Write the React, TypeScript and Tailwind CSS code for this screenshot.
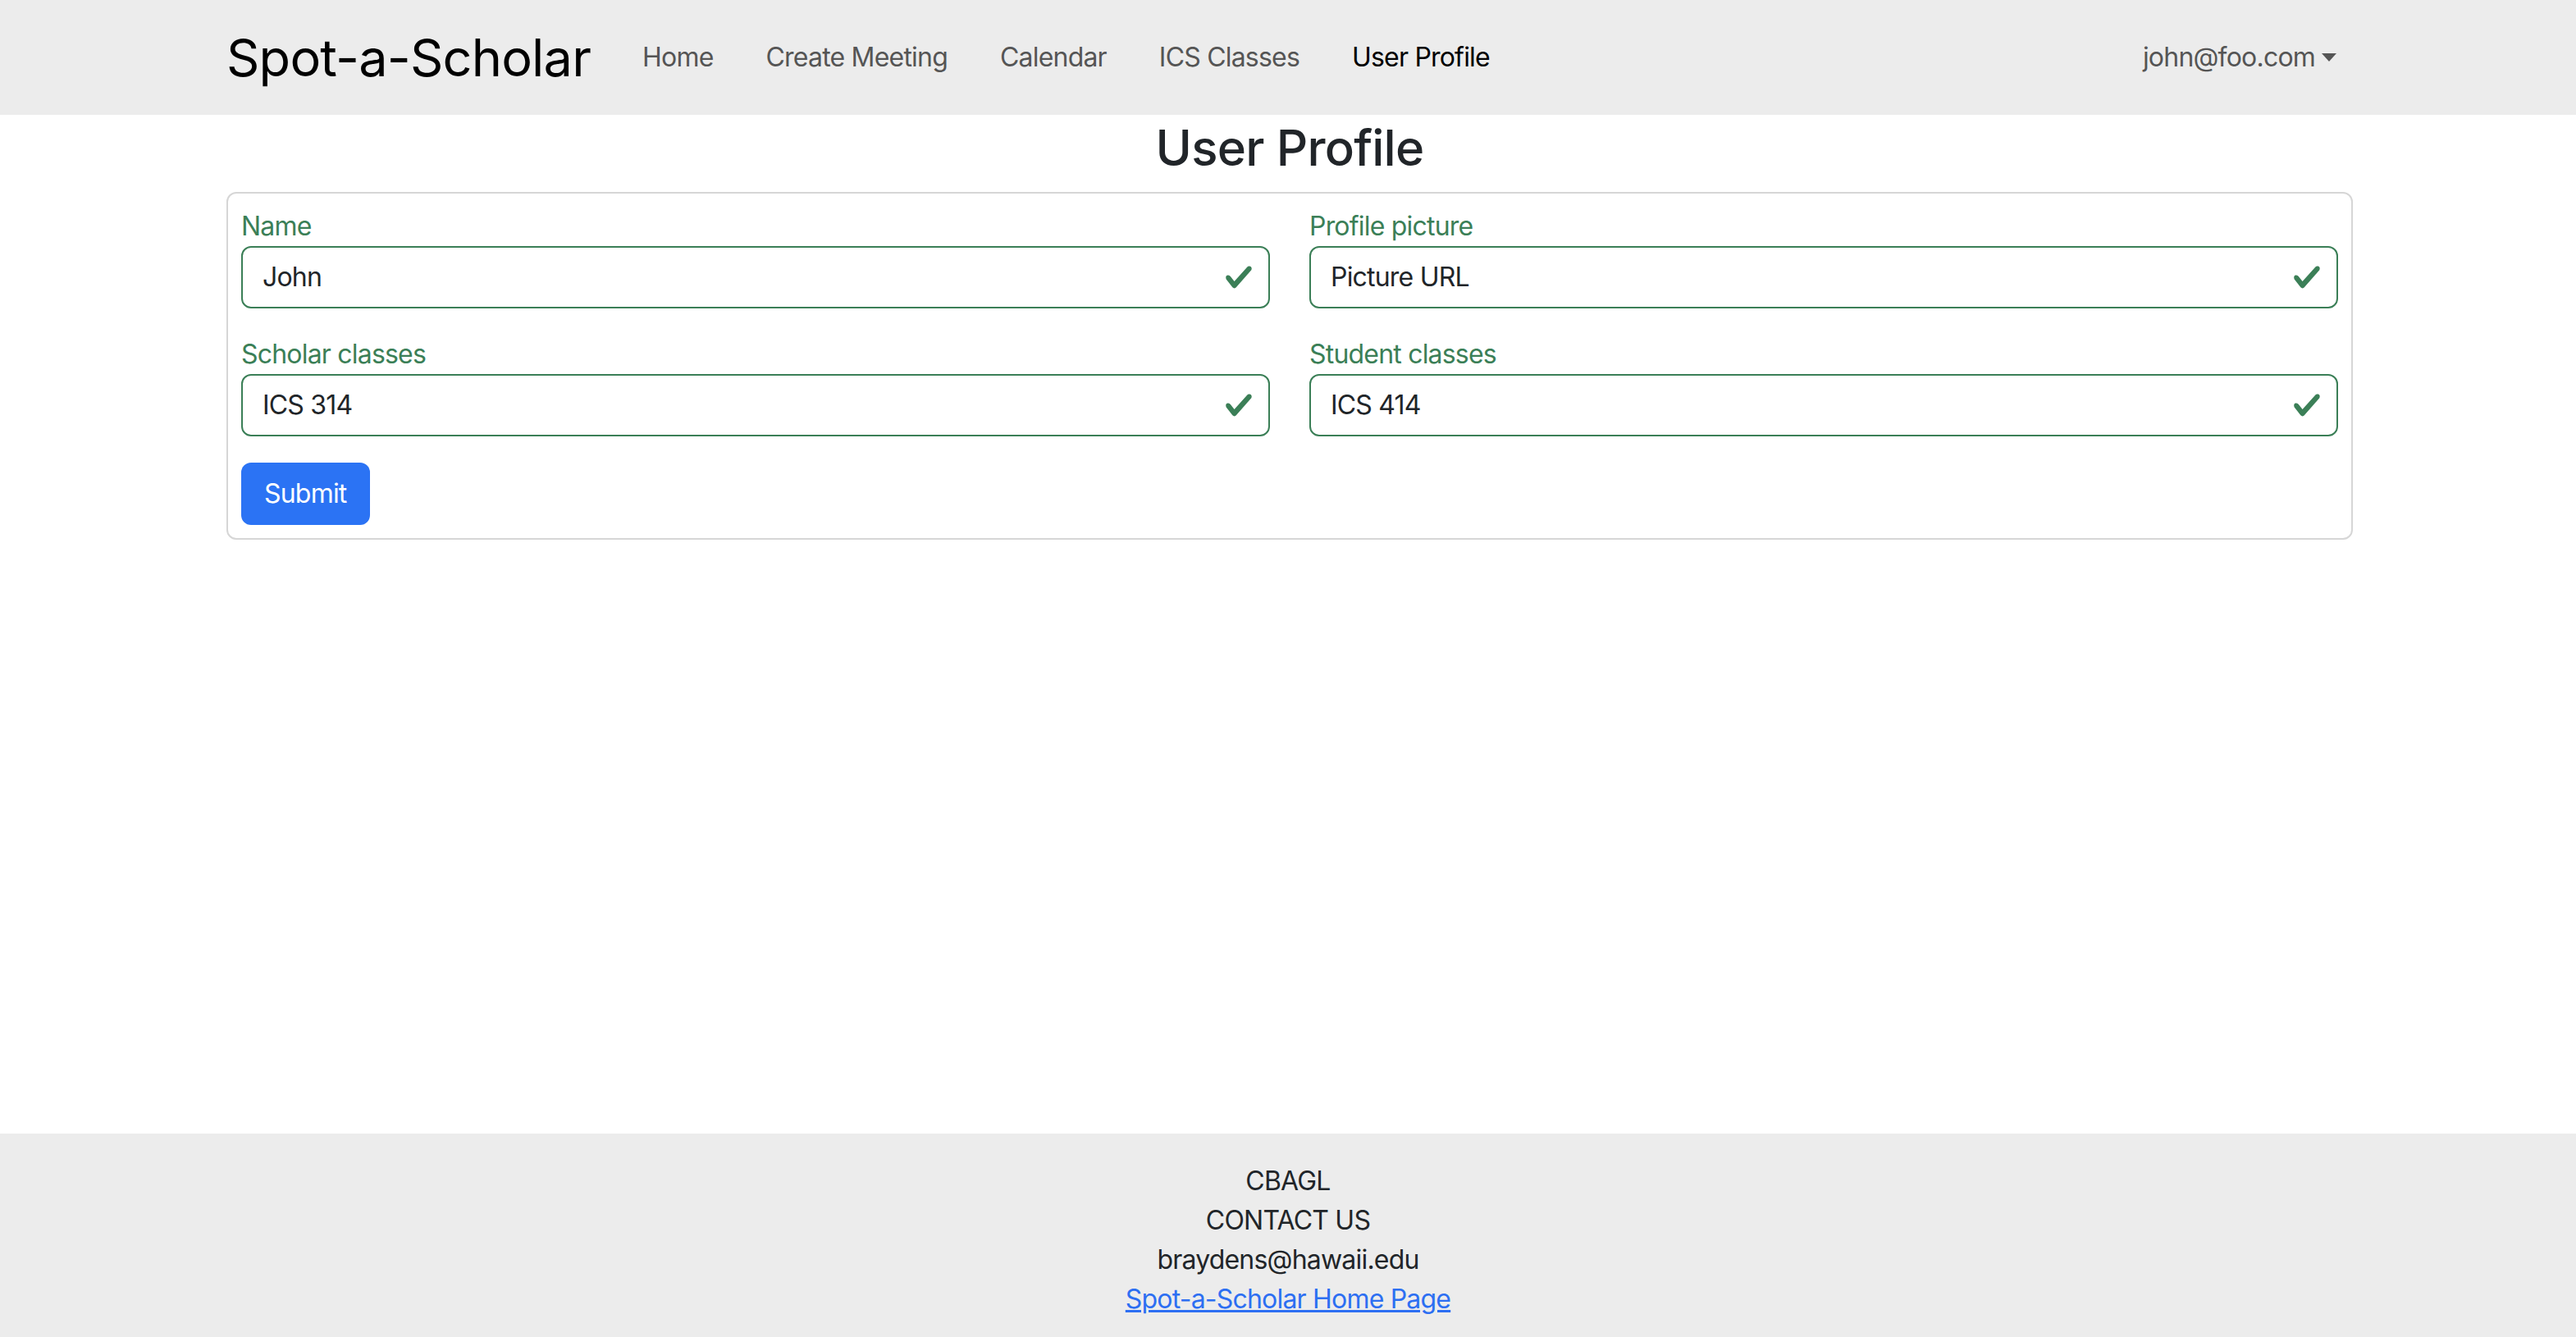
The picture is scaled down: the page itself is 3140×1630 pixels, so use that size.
import React from "react";

type Field = { label: string; value: string };

const rows: Field[][] = [
  [
    { label: "Name", value: "John" },
    { label: "Profile picture", value: "Picture URL" },
  ],
  [
    { label: "Scholar classes", value: "ICS 314" },
    { label: "Student classes", value: "ICS 414" },
  ],
];

const navLinks = ["Home", "Create Meeting", "Calendar", "ICS Classes", "User Profile"];

function CheckIcon() {
  return (
    <svg viewBox="0 0 8 8" className="h-[36px] w-[36px] shrink-0">
      <path
        fill="#3b7f57"
        d="M2.3 6.73.6 4.53c-.4-1.04.46-1.4 1.1-.8l1.1 1.4 3.4-3.8c.6-.63 1.6-.27 1.2.7l-4 4.6c-.43.5-.8.4-1.1.1z"
      />
    </svg>
  );
}

function ValidInput({ label, value }: Field) {
  return (
    <div className="flex flex-1 flex-col">
      <label className="text-[32px] leading-[48px] text-[#3b7f57]">{label}</label>
      <div className="flex h-[76px] items-center justify-between rounded-[12px] border-2 border-[#3b7f57] bg-white pl-[24px] pr-[18px]">
        <span className="text-[32px] text-[#212529]">{value}</span>
        <CheckIcon />
      </div>
    </div>
  );
}

export default function App() {
  return (
    <div
      className="flex min-h-screen flex-col bg-white tracking-[-0.8px] text-[#212529]"
      style={{ fontFamily: "Inter, 'Noto Sans', sans-serif" }}
    >
      <header className="h-[140px] bg-[#ececec]">
        <div className="mx-auto flex h-full w-[2640px] items-center px-[26px]">
          <a href="#" className="mr-[63px] text-[63px] leading-none tracking-[-0.8px] text-black">
            Spot-a-Scholar
          </a>
          <nav className="flex items-center gap-[64px]">
            {navLinks.map((l) => (
              <a
                key={l}
                href="#"
                className={`text-[32px] ${l === "User Profile" ? "text-black" : "text-[#555555]"}`}
              >
                {l}
              </a>
            ))}
          </nav>
          <div className="ml-auto mr-[16px] flex items-center gap-[8px] text-[32px] text-[#555555]">
            <span>john@foo.com</span>
            <span className="h-0 w-0 border-x-[9px] border-t-[10px] border-x-transparent border-t-[#555555]" />
          </div>
        </div>
      </header>

      <main className="ml-[276px] w-[2592px]">
        <h2 className="pt-[4px] pb-[18px] text-center text-[60px] font-medium leading-[72px] tracking-[-0.8px]">
          User Profile
        </h2>
        <div className="flex flex-col gap-[32px] rounded-[12px] border-2 border-[#d6d6d6] p-[16px]">
          {rows.map((row, i) => (
            <div key={i} className="flex gap-[48px]">
              {row.map((f) => (
                <ValidInput key={f.label} {...f} />
              ))}
            </div>
          ))}
          <div>
            <button className="h-[76px] rounded-[12px] bg-[#2b73f4] px-[28px] text-[32px] text-white">
              Submit
            </button>
          </div>
        </div>
      </main>

      <footer className="mt-auto bg-[#ececec] pt-[34px] pb-[22px] text-center text-[32px] leading-[48px] text-[#212529]">
        <div>CBAGL</div>
        <div>CONTACT US</div>
        <div>braydens@hawaii.edu</div>
        <a href="#" className="text-[#2d6ff2] underline">
          Spot-a-Scholar Home Page
        </a>
      </footer>
    </div>
  );
}
